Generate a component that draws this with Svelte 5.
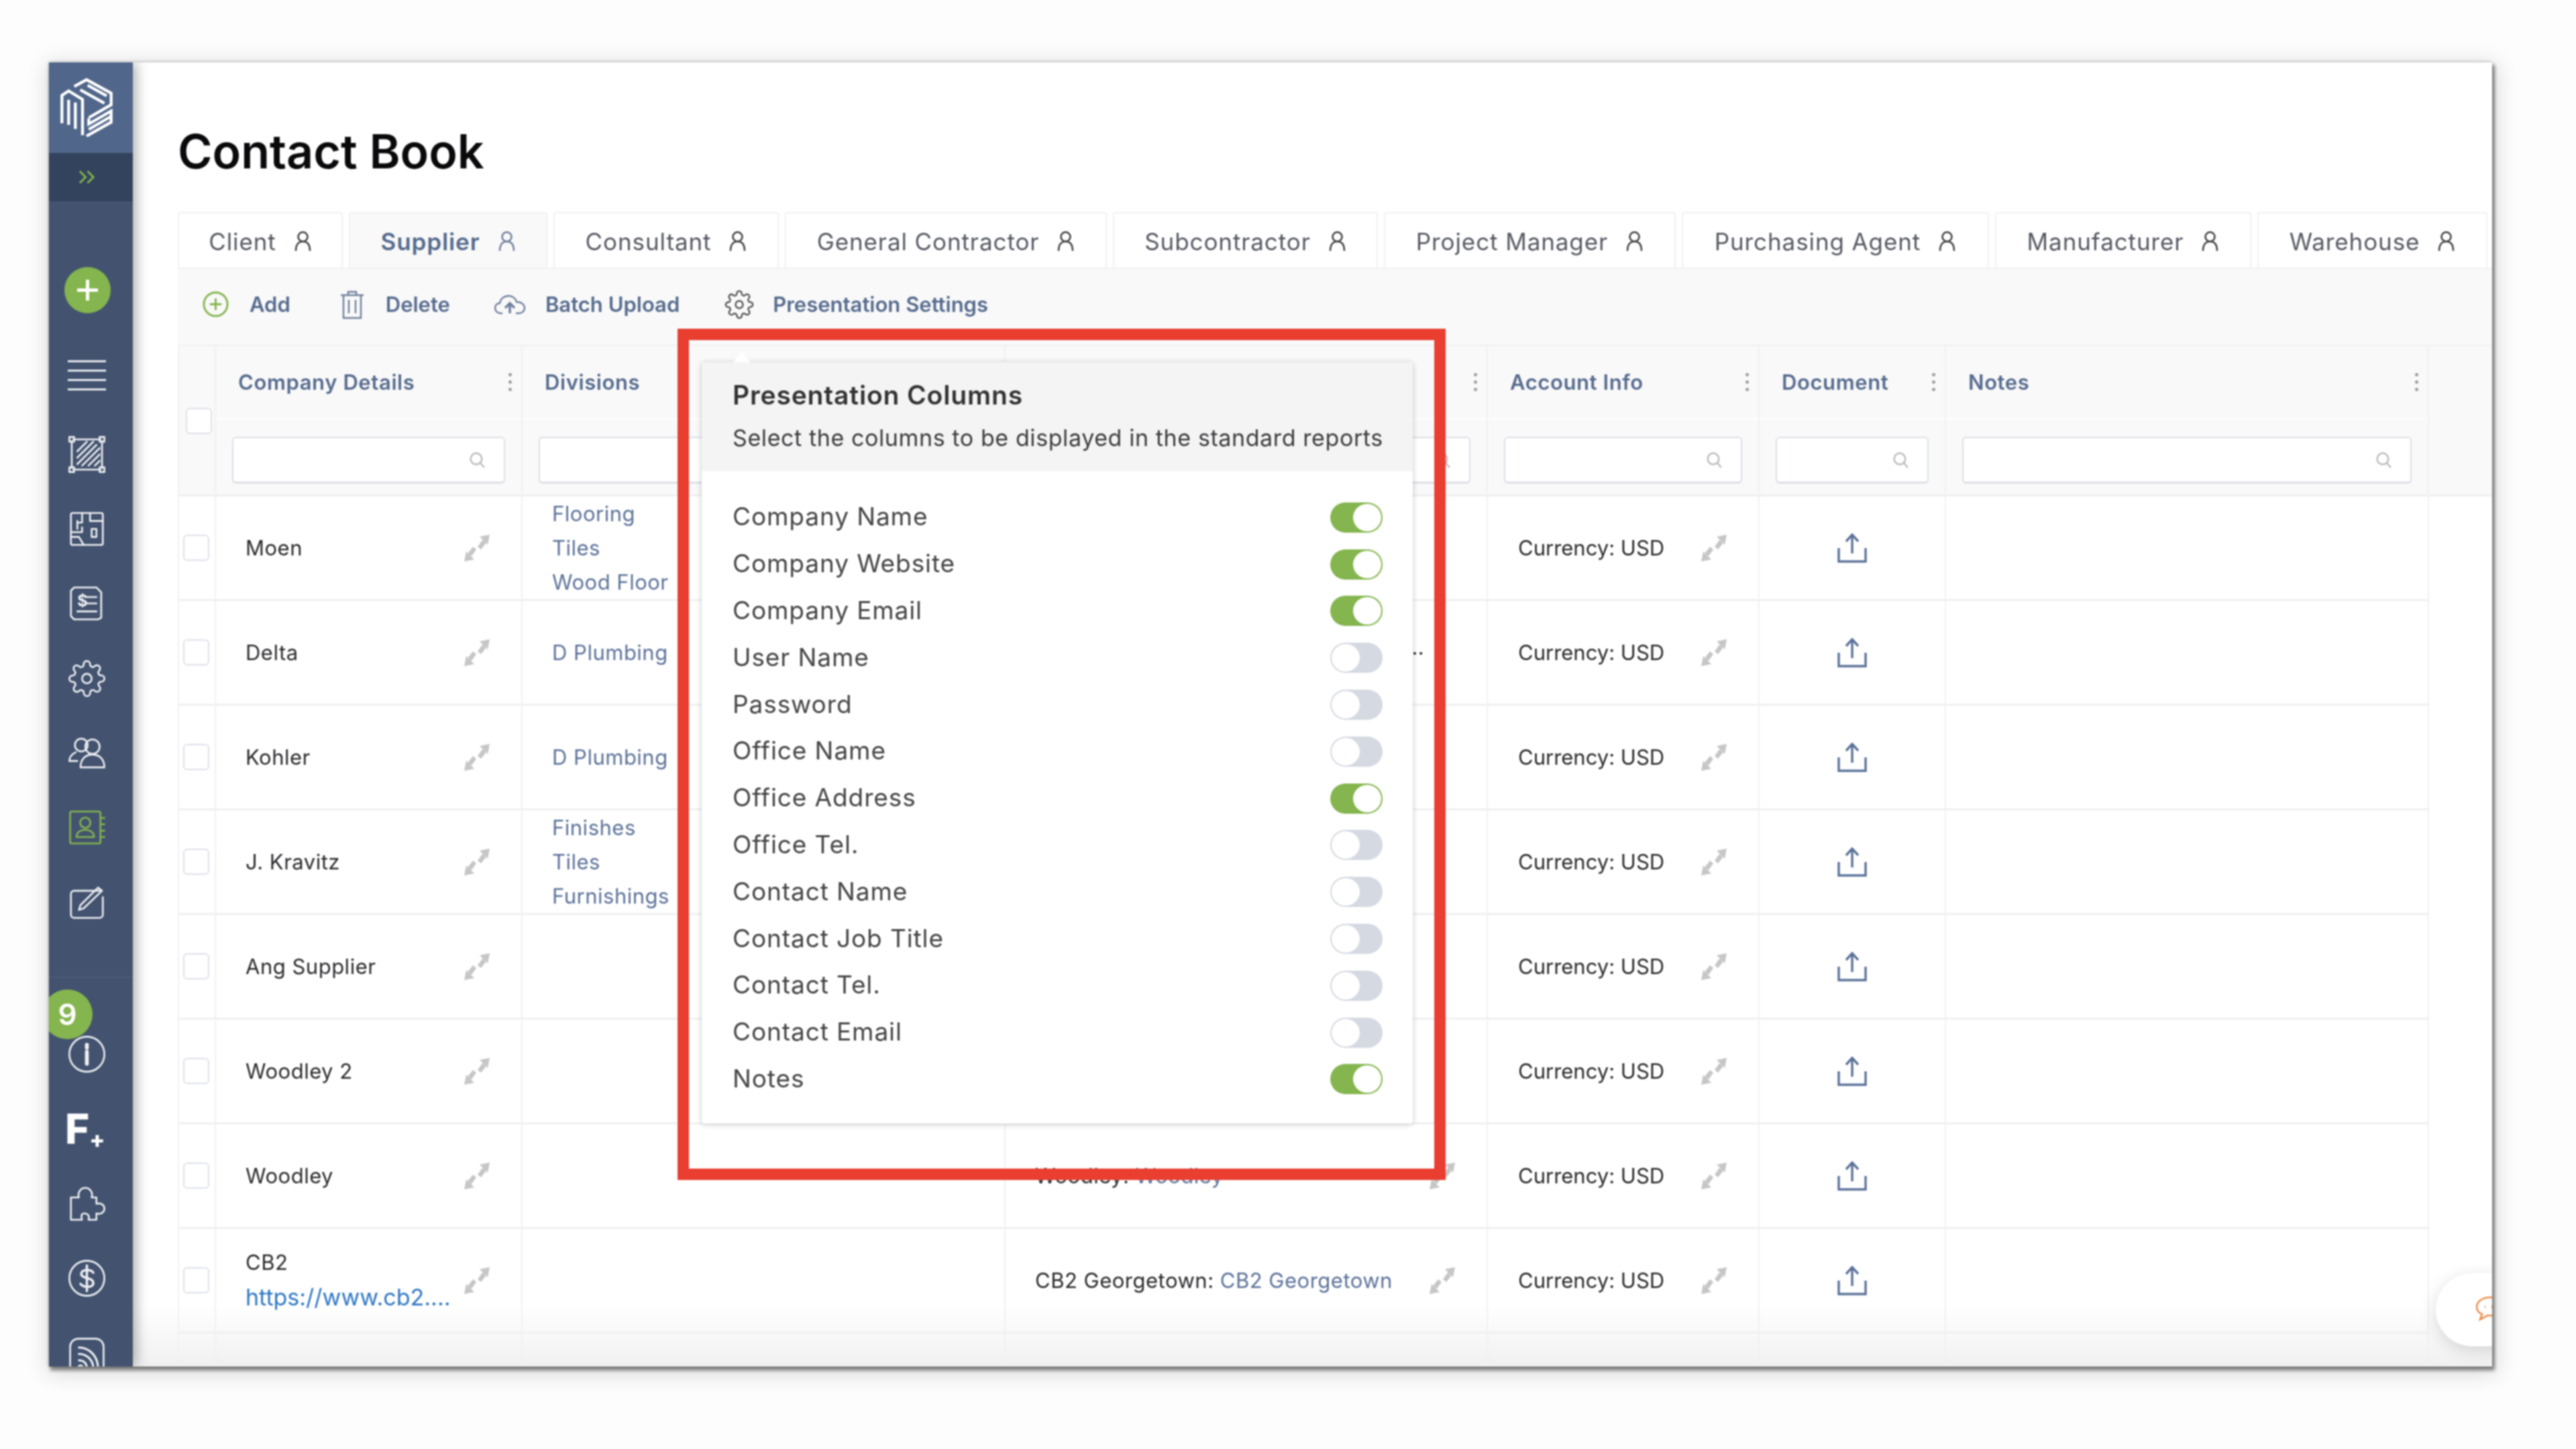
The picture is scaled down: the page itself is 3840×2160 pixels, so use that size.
<script>
  const gear =
    '<circle cx="12" cy="12" r="3"/><path d="M19.4 15a1.65 1.65 0 0 0 .33 1.82l.06.06a2 2 0 0 1 0 2.83 2 2 0 0 1-2.83 0l-.06-.06a1.65 1.65 0 0 0-1.82-.33 1.65 1.65 0 0 0-1 1.51V21a2 2 0 0 1-2 2 2 2 0 0 1-2-2v-.09A1.65 1.65 0 0 0 9 19.4a1.65 1.65 0 0 0-1.82.33l-.06.06a2 2 0 0 1-2.83 0 2 2 0 0 1 0-2.83l.06-.06a1.65 1.65 0 0 0 .33-1.82 1.65 1.65 0 0 0-1.51-1H3a2 2 0 0 1-2-2 2 2 0 0 1 2-2h.09A1.65 1.65 0 0 0 4.6 9a1.65 1.65 0 0 0-.33-1.82l-.06-.06a2 2 0 0 1 0-2.83 2 2 0 0 1 2.83 0l.06.06a1.65 1.65 0 0 0 1.82.33H9a1.65 1.65 0 0 0 1-1.51V3a2 2 0 0 1 2-2 2 2 0 0 1 2 2v.09a1.65 1.65 0 0 0 1 1.51 1.65 1.65 0 0 0 1.82-.33l.06-.06a2 2 0 0 1 2.83 0 2 2 0 0 1 0 2.83l-.06.06a1.65 1.65 0 0 0-.33 1.82V9a1.65 1.65 0 0 0 1.51 1H21a2 2 0 0 1 2 2 2 2 0 0 1-2 2h-.09a1.65 1.65 0 0 0-1.51 1z"/>';

  const icons = {
    area: '<path d="M3.5 2.5h17M3.5 21.5h17M2.5 3.5v17M21.5 3.5v17"/><rect x="1" y="1" width="3" height="3"/><rect x="20" y="1" width="3" height="3"/><rect x="1" y="20" width="3" height="3"/><rect x="20" y="20" width="3" height="3"/><path d="M6 10l6-6M6 14l10-10M6 18L18 6M9 19L20 8M13 19l7-7M17 19l3-3"/>',
    plan: '<rect x="2" y="2" width="20" height="20" rx="1"/><path d="M9 2v6H6M9 11v3H2M6 7v5M14 2v5h8M15 12h3v5h-3zM2 17h5l3 5"/>',
    invoice: '<path d="M4 2h14l3 3v16l-2 1H4l-2-2V4z"/><path d="M12 8h6M12 12h6M6 17h12"/><text x="6" y="14" class="glyph" font-size="10">$</text>',
    gear,
    people: '<circle cx="8.5" cy="7" r="4"/><circle cx="15.5" cy="8" r="4.5"/><path d="M5 11.5C2 13 1 15 1 17h5M8 21c0-5 3-8 7.5-8s7.5 3 7.5 8z"/>',
    book: '<rect x="1.5" y="2" width="19" height="20" rx="1"/><circle cx="11" cy="9" r="3.2"/><path d="M5.5 18c0-3 2.5-4.5 5.5-4.5s5.5 1.500 5.500 4.500zM21 6h2M21 10h2M21 14h2M21 18h2"/>',
    edit: '<path d="M20 5H4a2 2 0 0 0-2 2v13a2 2 0 0 0 2 2h16a2 2 0 0 0 2-2V9"/><path d="M7 17l1-3L19 3l2.500 2L10 16z"/>',
    info: '<circle cx="12" cy="12" r="11"/><path d="M12 10.500V18M12 6v2" stroke-width="2.400"/>',
    puzzle: '<path d="M2 22V8h5c-1-3 1-6 4-6s5 3 4 6h3v4c3-1 5 1 5 3s-2 4-5 3v4h-5c1-3-1-4-2.500-4S8 19 9 22z"/>',
    dollar: '<circle cx="12" cy="12" r="11"/><path d="M16 8.500c-1-2-7-2.500-7.500.5-.5 3.500 7.500 2 7.500 6 0 3-6 3-8 .5M12 4v16" stroke-width="1.500"/>',
    rss: '<rect x="1.500" y="1.500" width="21" height="26" rx="5"/><path d="M7 11c5 0 9 4 9 9M7 15c3 0 5 2 5 5M7 7c7 0 12 6 12 13" stroke-width="1.300"/><circle cx="8" cy="19.500" r="1.300"/>'
  };

  const navTop = ['area', 'plan', 'invoice', 'gear', 'people', 'book', 'edit'];
  const navBottom = ['info', 'fplus', 'puzzle', 'dollar', 'rss'];

  const tabs = [
    'Client',
    'Supplier',
    'Consultant',
    'General Contractor',
    'Subcontractor',
    'Project Manager',
    'Purchasing Agent',
    'Manufacturer',
    'Warehouse'
  ];

  const columns = [
    { label: 'Company Details' },
    { label: 'Divisions' },
    { label: '' },
    { label: 'Account Info' },
    { label: 'Document' },
    { label: 'Notes' }
  ];

  const rows = [
    { name: 'Moen', divisions: ['Flooring', 'Tiles', 'Wood Floor'] },
    { name: 'Delta', divisions: ['D Plumbing'], more: true },
    { name: 'Kohler', divisions: ['D Plumbing'] },
    { name: 'J. Kravitz', divisions: ['Finishes', 'Tiles', 'Furnishings'] },
    { name: 'Ang Supplier', divisions: [] },
    { name: 'Woodley 2', divisions: [] },
    { name: 'Woodley', divisions: [], office: 'Woodley' },
    { name: 'CB2', url: 'https://www.cb2....', divisions: [], office: 'CB2 Georgetown' }
  ];

  const presentation = [
    ['Company Name', true],
    ['Company Website', true],
    ['Company Email', true],
    ['User Name', false],
    ['Password', false],
    ['Office Name', false],
    ['Office Address', true],
    ['Office Tel.', false],
    ['Contact Name', false],
    ['Contact Job Title', false],
    ['Contact Tel.', false],
    ['Contact Email', false],
    ['Notes', true]
  ];
</script>

{#snippet expand()}
  <svg class="expand" viewBox="0 0 38 40">
    <path d="M38 0L23 3l12 12zM27 8l6 4-8 10-5-4zM0 40l15-3L3 25zM11 32l-6-4 8-10 5 4z" />
  </svg>
{/snippet}

{#snippet search()}
  <svg class="search" viewBox="0 0 24 24">
    <circle cx="10.500" cy="10.500" r="8" />
    <path d="M16.500 16.500L22 23" />
  </svg>
{/snippet}

{#snippet upload()}
  <svg class="upload" viewBox="0 0 44 44">
    <path d="M22 30V3M13 12l9-10 9 10M2 22v20h40V22" />
  </svg>
{/snippet}

{#snippet person()}
  <svg class="person" viewBox="0 0 27 32">
    <circle cx="13.500" cy="9" r="7" />
    <path d="M3 30c0-8 3-14 10.500-14S24 22 24 30" />
  </svg>
{/snippet}

<div class="page">
  <div class="window">
    <aside class="sidebar">
      <div class="logo">
        <svg viewBox="0 0 240 270">
          <path d="M10 205V80l30-20 62 38v160M40 100v112M70 112v118" />
          <path d="M65 40l55-30 110 60v52l-100 58M92 55l108 60M125 35l85 47" />
          <path d="M120 262l110-62v-50l-100 58v-25M130 232l100-58" />
        </svg>
      </div>
      <div class="expander">
        <svg viewBox="0 0 28 22"><path d="M2 2l9 9-9 9M14 2l9 9-9 9" /></svg>
      </div>
      <div class="add"><span></span></div>
      <div class="burger"><i></i><i></i><i></i><i></i></div>
      <nav class="nav-top">
        {#each navTop as name}
          <div class="nav-item" class:active={name === 'book'}>
            <svg viewBox="0 0 24 24">{@html icons[name]}</svg>
          </div>
        {/each}
      </nav>
      <nav class="nav-bottom">
        <span class="badge">9</span>
        {#each navBottom as name}
          <div class="nav-item">
            {#if name === 'fplus'}
              <span class="fplus">F<small>+</small></span>
            {:else if name === 'rss'}
              <svg viewBox="0 0 24 29" class="tall">{@html icons[name]}</svg>
            {:else}
              <svg viewBox="0 0 24 24">{@html icons[name]}</svg>
            {/if}
          </div>
        {/each}
      </nav>
    </aside>

    <main class="main">
      <h1>Contact Book</h1>

      <div class="tabs">
        {#each tabs as tab, i}
          <div class="tab" class:current={i === 1}>
            <span>{tab}</span>
            {@render person()}
          </div>
        {/each}
      </div>

      <div class="toolbar">
        <div class="tool add-tool">
          <svg viewBox="0 0 40 40" class="green"><circle cx="20" cy="20" r="18" /><path d="M20 11v18M11 20h18" /></svg>
          Add
        </div>
        <div class="tool delete-tool">
          <svg viewBox="0 0 40 44"><path d="M3 8h34M14 8V3h12v5M7 8v34h26V8M15 15v20M25 15v20" /></svg>
          Delete
        </div>
        <div class="tool upload-tool">
          <svg viewBox="0 0 46 30"><path d="M12 28H9C4 28 1 24 1 20c0-4 3-7 7-7 1-7 7-11 13-11 6 0 11 4 12 9 7 0 12 4 12 9s-4 8-9 8h-4" /><path d="M23 28V14M16 20l7-7 7 7" stroke-width="3.500" /></svg>
          Batch Upload
        </div>
        <div class="tool settings-tool">
          <svg viewBox="0 0 24 24" class="thin">{@html gear}</svg>
          Presentation Settings
        </div>
      </div>

      <div class="table">
        <div class="thead">
          <div class="check-head"><span class="check"></span></div>
          {#each columns as col}
            <div class="head-cell">
              <div class="head-label">
                <span>{col.label}</span>
                <span class="kebab"><i></i><i></i><i></i></span>
              </div>
              <div class="head-filter">
                <div class="filter">{@render search()}</div>
              </div>
            </div>
          {/each}
          <div class="head-tail"></div>
        </div>

        {#each rows as row}
          <div class="row">
            <div class="cell check-cell"><span class="check"></span></div>
            <div class="cell split">
              <div class="name">
                <div>{row.name}</div>
                {#if row.url}<a href="#top">{row.url}</a>{/if}
              </div>
              {@render expand()}
            </div>
            <div class="cell divisions">
              {#each row.divisions as d}<div>{d}</div>{/each}
            </div>
            <div class="cell split">
              {#if row.office}
                <div>{row.office}: <span class="link">{row.office}</span></div>
              {/if}
              {#if row.more}<span class="more">...</span>{/if}
              {@render expand()}
            </div>
            <div class="cell split account">
              <div>Currency: USD</div>
              {@render expand()}
            </div>
            <div class="cell doc">{@render upload()}</div>
            <div class="cell notes"></div>
            <div class="cell tail"></div>
          </div>
        {/each}
        <div class="row last">
          <div class="cell"></div>
          <div class="cell"></div>
          <div class="cell"></div>
          <div class="cell"></div>
          <div class="cell"></div>
          <div class="cell"></div>
          <div class="cell"></div>
          <div class="cell tail"></div>
        </div>
      </div>
    </main>

    <div class="fade"></div>

    <div class="highlight"></div>

    <div class="popover">
      <div class="pop-head">
        <h3>Presentation Columns</h3>
        <p>Select the columns to be displayed in the standard reports</p>
      </div>
      <div class="pop-list">
        {#each presentation as [label, on]}
          <div class="pop-row">
            <span>{label}</span>
            <span class="toggle" class:on></span>
          </div>
        {/each}
      </div>
    </div>

    <div class="chat">
      <svg viewBox="0 0 44 38"><path d="M22 2C11 2 2 8 2 16c0 5 3 9 8 11l-3 8 11-6h4c11 0 20-6 20-13S33 2 22 2z" /><path d="M14 16h1M24 16h1" stroke-width="4" /></svg>
    </div>
  </div>
</div>

<style>
  :global(body) {
    background: #fdfdfd;
    font-family: Inter, 'Liberation Sans', sans-serif;
  }

  .page {
    height: 2160px;
    box-sizing: border-box;
    padding: 93px 0 0 73px;
    overflow: hidden;
  }

  .window {
    position: relative;
    display: flex;
    width: 3642px;
    height: 1944px;
    background: #fff;
    overflow: hidden;
    color: #2a2a2e;
    filter: blur(0.9px);
    box-shadow:
      3px 5px 5px 1px rgba(0, 0, 0, 0.42),
      2px 6px 30px 5px rgba(0, 0, 0, 0.14),
      0 0 5px rgba(0, 0, 0, 0.3);
  }

  .sidebar {
    flex: 0 0 125px;
    position: relative;
    z-index: 2;
    background: #43536f;
    box-shadow: 4px 0 18px rgba(0, 0, 0, 0.35);
    color: #fff;
  }

  .logo {
    height: 135px;
    background: #50668a;
    display: flex;
    justify-content: center;
    padding: 22px 14px 0 0;
    box-sizing: border-box;
  }

  .logo svg {
    width: 80px;
    height: 91px;
    fill: none;
    stroke: #fff;
    stroke-width: 13;
  }

  .expander {
    height: 72px;
    padding-right: 10px;
    box-sizing: border-box;
    background: #33435d;
    display: flex;
    align-items: center;
    justify-content: center;
  }

  .expander svg {
    width: 27px;
    height: 22px;
    fill: none;
    stroke: #7fb34a;
    stroke-width: 3;
  }

  .add {
    position: relative;
    width: 69px;
    height: 69px;
    margin: 98px 0 0 23px;
    border-radius: 50%;
    background: #84b54e;
  }

  .add span::before,
  .add span::after {
    content: '';
    position: absolute;
    background: #fff;
  }

  .add span::before {
    left: 19px;
    right: 19px;
    top: 32px;
    height: 5px;
  }

  .add span::after {
    top: 19px;
    bottom: 19px;
    left: 32px;
    width: 5px;
  }

  .burger {
    display: flex;
    flex-direction: column;
    justify-content: space-between;
    width: 57px;
    height: 45px;
    margin: 70px 0 0 28px;
  }

  .burger i {
    display: block;
    height: 3px;
    background: #e6e9ee;
  }

  .nav-top {
    margin-top: 40px;
  }

  .nav-bottom {
    position: relative;
    margin-top: 56px;
    border-top: 2px solid #4c5c78;
    padding-top: 58px;
  }

  .nav-item {
    height: 111.2px;
    display: flex;
    align-items: center;
    padding-left: 28px;
  }

  .nav-item svg {
    width: 57px;
    height: 57px;
    fill: none;
    stroke: #eef0f3;
    stroke-width: 1.1;
    stroke-linejoin: round;
    stroke-linecap: round;
  }

  .nav-item svg.tall {
    height: 69px;
    margin-top: 20px;
  }

  .nav-item.active svg {
    stroke: #84b54e;
  }

  .nav-item :global(.glyph) {
    fill: #eef0f3;
    stroke: none;
    font-family: Inter, sans-serif;
    font-weight: 700;
  }

  .badge {
    position: absolute;
    left: -10px;
    top: 17px;
    width: 75px;
    height: 74px;
    border-radius: 50%;
    background: #84b54e;
    color: #fff;
    font-size: 44px;
    font-weight: 600;
    line-height: 74px;
    text-align: center;
  }

  .fplus {
    margin-left: -4px;
    font-size: 62px;
    font-weight: 800;
    line-height: 1;
    color: #fff;
  }

  .fplus small {
    font-size: 34px;
    position: relative;
    top: 6px;
  }

  .main {
    flex: 1;
    min-width: 0;
    padding-left: 67px;
  }

  h1 {
    margin: 0;
    height: 223px;
    box-sizing: border-box;
    padding-top: 90px;
    font-size: 70px;
    line-height: 86px;
    font-weight: 600;
    color: #0a0a0c;
  }

  .tabs {
    display: grid;
    grid-template-columns: 246px 296px 336px 480px 395px 435px 458px 382px 343px;
    column-gap: 9px;
    height: 83px;
  }

  .tab {
    display: flex;
    align-items: center;
    justify-content: center;
    gap: 26px;
    border: 2px solid #f1f1f1;
    border-bottom: 0;
    border-radius: 4px 4px 0 0;
    padding-top: 3px;
    box-sizing: border-box;
    font-size: 35px;
    letter-spacing: 0.9px;
    color: #555962;
    white-space: nowrap;
  }

  .tab.current {
    background: #f9f9f9;
    color: #566b8e;
    font-weight: 600;
  }

  .person {
    width: 27px;
    height: 32px;
    fill: none;
    stroke: #444;
    stroke-width: 2.6;
  }

  .current .person {
    stroke: #72819c;
  }

  .toolbar {
    position: relative;
    display: flex;
    align-items: center;
    height: 115px;
    padding-bottom: 8px;
    background: #f9f9f9;
    border-top: 2px solid #f1f1f1;
    box-sizing: border-box;
    font-size: 31px;
    font-weight: 600;
    color: #566b8e;
  }

  .tool {
    display: flex;
    align-items: center;
    white-space: nowrap;
  }

  .tool svg {
    fill: none;
    stroke: #6f7f9b;
    stroke-width: 2.4;
  }

  .add-tool {
    margin-left: 37px;
    gap: 31px;
  }

  .add-tool svg {
    width: 39px;
    height: 39px;
    stroke: #84b54e;
    stroke-width: 3;
  }

  .delete-tool {
    margin-left: 72px;
    gap: 30px;
  }

  .delete-tool svg {
    width: 40px;
    height: 44px;
  }

  .upload-tool {
    margin-left: 66px;
    gap: 30px;
  }

  .upload-tool svg {
    width: 46px;
    height: 30px;
  }

  .settings-tool {
    margin-left: 67px;
    gap: 28px;
  }

  .settings-tool svg {
    width: 44px;
    height: 44px;
    stroke: #555;
    stroke-width: 1.3;
  }

  .thead,
  .row {
    display: grid;
    grid-template-columns: 55px 457px 720px 719px 405px 278px 720px 96px;
  }

  .table {
    border-top: 2px solid #f0f0f0;
    border-left: 2px solid #f1f1f1;
  }

  .thead {
    height: 224px;
    box-sizing: border-box;
    background: #f9f9f9;
    border-bottom: 3px solid #f0f0f0;
  }

  .check-head {
    border-right: 2px solid #f1f1f1;
    display: flex;
    align-items: center;
    justify-content: center;
    padding: 2px 0 0 6px;
  }

  .check {
    display: block;
    box-sizing: border-box;
    width: 39px;
    height: 39px;
    border: 2px solid #dfe1ea;
    border-radius: 6px;
    background: #fff;
  }

  .head-cell {
    display: flex;
    flex-direction: column;
    border-right: 2px solid #f1f1f1;
  }

  .head-label {
    height: 110px;
    display: flex;
    align-items: center;
    justify-content: space-between;
    padding: 0 14px 0 33px;
    box-sizing: border-box;
    border-bottom: 3px solid #fdfdfd;
    font-size: 31px;
    letter-spacing: 0.6px;
    font-weight: 600;
    color: #566b8e;
  }

  .kebab {
    display: flex;
    flex-direction: column;
    gap: 6px;
  }

  .kebab i {
    display: block;
    width: 5px;
    height: 5px;
    border-radius: 50%;
    background: #9a9fa8;
  }

  .head-filter {
    flex: 1;
    display: flex;
    align-items: center;
    padding: 8px 24px 0;
  }

  .filter {
    flex: 1;
    height: 70px;
    box-sizing: border-box;
    border: 2px solid #dcdfe7;
    border-bottom-width: 3px;
    border-radius: 6px;
    background: #fff;
    display: flex;
    align-items: center;
    justify-content: flex-end;
    padding-right: 27px;
  }

  .search {
    width: 25px;
    height: 25px;
    fill: none;
    stroke: #bcbcbc;
    stroke-width: 2.4;
  }

  .row {
    height: 156px;
    font-size: 31px;
    letter-spacing: 0.5px;
  }

  .row.last {
    height: 60px;
  }

  .cell {
    box-sizing: border-box;
    border-right: 2px solid #f1f1f1;
    border-bottom: 3px solid #f0f0f0;
    display: flex;
    align-items: center;
    min-width: 0;
  }

  .last .cell,
  .cell.tail {
    border-bottom: 0;
  }

  .cell.tail {
    border-right: 0;
  }

  .check-cell {
    padding-left: 6px;
  }

  .split {
    justify-content: space-between;
    padding: 0 47px 0 44px;
    white-space: nowrap;
    position: relative;
  }

  .account {
    padding-left: 45px;
    letter-spacing: 0;
  }

  .name a {
    display: block;
    margin-top: 13px;
    font-size: 34px;
    letter-spacing: 0;
    color: #2f77c4;
    text-decoration: none;
  }

  .expand {
    flex: 0 0 38px;
    width: 38px;
    height: 40px;
    fill: #c6c6c6;
  }

  .divisions {
    flex-direction: column;
    align-items: flex-start;
    justify-content: center;
    gap: 13px;
    padding-left: 44px;
    color: #5b7199;
    line-height: 38px;
    white-space: nowrap;
  }

  .link {
    color: #5b7199;
  }

  .more {
    position: absolute;
    left: 596px;
    top: 50px;
  }

  .doc {
    justify-content: center;
  }

  .upload {
    width: 44px;
    height: 44px;
    fill: none;
    stroke: #5b7199;
    stroke-width: 3.4;
  }

  .fade {
    position: absolute;
    left: 125px;
    right: 0;
    bottom: 0;
    height: 90px;
    background: linear-gradient(to bottom, rgba(240, 240, 240, 0), rgba(240, 240, 240, 0.95));
    pointer-events: none;
  }

  .highlight {
    position: absolute;
    left: 937px;
    top: 397px;
    width: 1145px;
    height: 1269px;
    box-sizing: border-box;
    border: 17px solid #e93e30;
    z-index: 3;
  }

  .popover {
    position: absolute;
    left: 973px;
    top: 447px;
    width: 1060px;
    background: #fff;
    border-radius: 4px;
    box-shadow: 0 1px 8px rgba(0, 0, 0, 0.22);
    z-index: 4;
  }

  .popover::before {
    content: '';
    position: absolute;
    left: 47px;
    top: -16px;
    border: 13px solid transparent;
    border-top: 0;
    border-bottom: 16px solid #fff;
  }

  .pop-head {
    height: 162px;
    box-sizing: border-box;
    padding: 26px 46px 0;
    background: #f4f4f4;
  }

  h3 {
    margin: 0;
    font-size: 39px;
    letter-spacing: 0.85px;
    line-height: 46px;
    font-weight: 600;
    color: #333;
  }

  .pop-head p {
    margin: 20px 0 0;
    font-size: 34px;
    letter-spacing: 0.6px;
    line-height: 42px;
    color: #3c3c40;
    white-space: nowrap;
  }

  .pop-list {
    padding: 33px 45px 33px 46px;
  }

  .pop-row {
    height: 69.8px;
    display: flex;
    align-items: center;
    justify-content: space-between;
    font-size: 37px;
    letter-spacing: 0.9px;
    color: #444;
  }

  .toggle {
    position: relative;
    width: 78px;
    height: 45px;
    margin-top: 3px;
    border-radius: 23px;
    background: #d5d9e2;
  }

  .toggle::after {
    content: '';
    position: absolute;
    top: 2px;
    left: 2px;
    width: 42px;
    height: 41px;
    border-radius: 50%;
    background: #fff;
  }

  .toggle.on {
    background: #84b54e;
  }

  .toggle.on::after {
    left: auto;
    right: 2px;
  }

  .chat {
    position: absolute;
    left: 3558px;
    top: 1805px;
    width: 140px;
    height: 109px;
    border-radius: 55px;
    background: #fff;
    box-shadow: 0 6px 26px rgba(0, 0, 0, 0.14);
    z-index: 1;
  }

  .chat svg {
    position: absolute;
    left: 59px;
    top: 34px;
    width: 44px;
    height: 38px;
    fill: none;
    stroke: #ee8f4c;
    stroke-width: 2.6;
  }
</style>
